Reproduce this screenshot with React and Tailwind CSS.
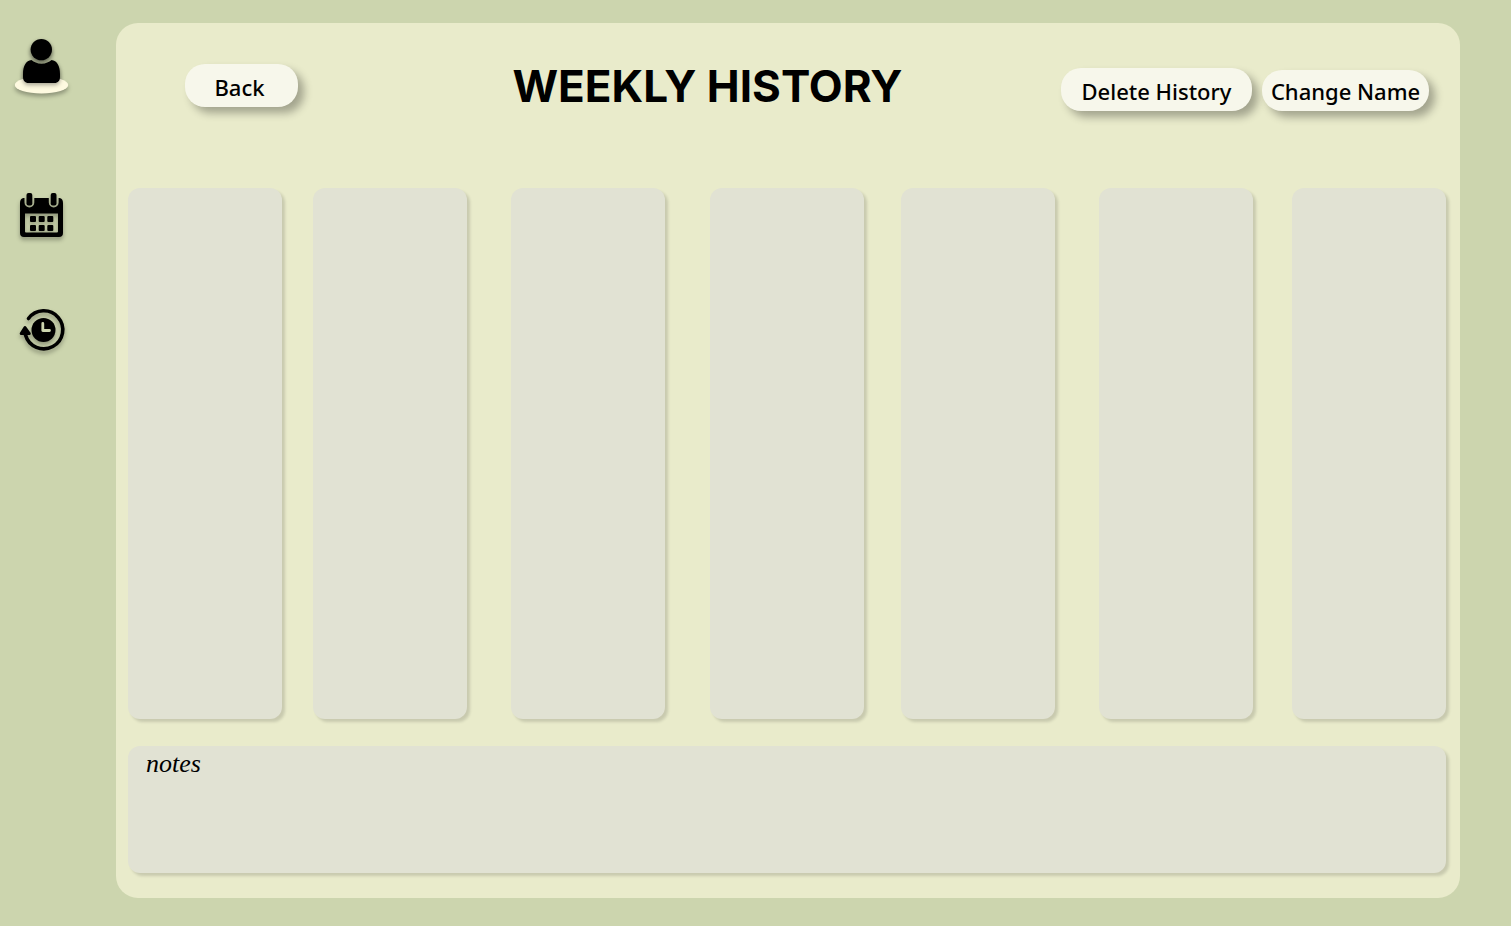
const days = ['Monday', 'Tuesday', 'Wednesday', 'Thursday', 'Friday', 'Saturday', 'Sunday'];

function UserIcon() {
  return (
    <svg width="56" height="60" viewBox="0 0 56 60" className="overflow-visible drop-shadow-[0_3px_2px_rgba(0,0,0,0.3)]" aria-hidden="true">
      <ellipse cx="27.5" cy="48" rx="26.7" ry="8.5" fill="#fefae0" />
      <g className="drop-shadow-[0_2px_2px_rgba(0,0,0,0.35)]">
        <circle cx="27.3" cy="12.6" r="10.7" />
        <path d="M17.5 23C20 25 23 26.7 27.500 26.700S35 25 37.500 23C43 23.500 46 29 46 37V40C46 43.500 44 46 40.500 46H14.500C11 46 9 43.500 9 40V37C9 29 12 23.500 17.500 23Z" />
      </g>
    </svg>
  );
}

function CalendarIcon() {
  return (
    <svg width="44" height="46" viewBox="0 0 44 46" className="overflow-visible drop-shadow-[0_3px_2px_rgba(0,0,0,0.3)]" aria-hidden="true">
      <path fillRule="evenodd" d="M3.500 5H4.500V9.500A4.900 5 0 0 0 14.300 9.500V5H28.800V9.500A4.900 5 0 0 0 38.600 9.500V5H39.500Q43 5.500 43 10V40Q43 44 39 44H4Q0 44 0 40V10Q0 5.500 3.500 5ZM5 20.500V38.500Q5 39.500 6 39.500H37Q38 39.500 38 38.500V20.500Z" />
      <rect x="6.500" y="0" width="5.800" height="12.500" rx="2" />
      <rect x="30.700" y="0" width="5.800" height="12.500" rx="2" />
      <rect x="10" y="23" width="6" height="6" rx="1" />
      <rect x="18.700" y="23" width="6" height="6" rx="1" />
      <rect x="27.300" y="23" width="6" height="6" rx="1" />
      <rect x="10" y="32" width="6" height="6" rx="1" />
      <rect x="18.700" y="32" width="6" height="6" rx="1" />
      <rect x="27.300" y="32" width="6" height="6" rx="1" />
    </svg>
  );
}

function HistoryIcon() {
  return (
    <svg width="46" height="42" viewBox="0 0 46 42" className="overflow-visible drop-shadow-[0_3px_2px_rgba(0,0,0,0.3)]" aria-hidden="true">
      <path d="M8.500 9.500A19 19 0 1 1 5.500 26" fill="none" stroke="#000" strokeWidth="3.600" strokeLinecap="round" />
      <path d="M5 18.500L9.300 24.500H1.200Z" stroke="#000" strokeWidth="3" strokeLinejoin="round" />
      <circle cx="23.500" cy="21" r="12" />
      <path d="M22.800 14.500V21.500H29.500" fill="none" stroke="#ccd5ae" strokeWidth="2.800" strokeLinecap="round" strokeLinejoin="round" />
    </svg>
  );
}

function PillButton({ children, className }) {
  return (
    <button
      type="button"
      className={`rounded-[20px] bg-[#f7f7eb] text-[22px] leading-[30px] font-medium whitespace-nowrap text-black shadow-[6px_6px_8px_rgba(0,0,0,0.3)] ${className}`}
    >
      {children}
    </button>
  );
}

export default function App() {
  return (
    <div className="flex min-h-screen bg-[#ccd5ae] font-['Noto_Sans','Open_Sans',sans-serif] text-black">
      <nav aria-label="Main" className="flex w-[116px] shrink-0 flex-col items-start pt-[37px] pl-[14px]">
        <a href="#profile" aria-label="Profile"><UserIcon /></a>
        <a href="#calendar" aria-label="Calendar" className="mt-24 ml-[6px]"><CalendarIcon /></a>
        <a href="#history" aria-label="History" className="mt-[70px] ml-[6px]"><HistoryIcon /></a>
      </nav>

      <main className="mt-[23px] mr-[51px] mb-7 flex flex-1 flex-col rounded-[22px] bg-[#e9ebcb] pr-[14px] pb-[25px] pl-3">
        <header className="flex h-[165px] shrink-0 items-start pt-[41px]">
          <PillButton className="ml-[57px] h-[43px] w-[113px] pt-[2px] pr-1">Back</PillButton>
          <h1 className="flex-1 pl-14 text-center font-[Inter,sans-serif] text-[44px] leading-[44px] font-bold whitespace-nowrap">
            WEEKLY HISTORY
          </h1>
          <div className="mt-1 mr-[17px] flex items-end gap-[10px]">
            <PillButton className="h-[43px] w-[191px] pt-[2px]">Delete History</PillButton>
            <PillButton className="h-[41px] w-[167px]">Change Name</PillButton>
          </div>
        </header>

        <div className="grid min-h-[531px] flex-1 grid-cols-[185fr_198fr_199fr_191fr_198fr_193fr_154fr]">
          {days.map((day) => (
            <section
              key={day}
              aria-label={day}
              className="w-[154px] rounded-xl bg-[#e1e2d3] shadow-[3px_3px_3px_rgba(0,0,0,0.14)]"
            />
          ))}
        </div>

        <div className="mt-[27px] flex h-[127px] shrink-0 flex-col rounded-xl bg-[#e1e2d3] px-[18px] pt-1 shadow-[3px_3px_3px_rgba(0,0,0,0.14)]">
          <label htmlFor="notes" className="self-start font-['Liberation_Serif',serif] text-[26px] leading-[28px] italic">
            notes
          </label>
          <textarea id="notes" className="w-full flex-1 resize-none bg-transparent text-base outline-none" />
        </div>
      </main>
    </div>
  );
}
